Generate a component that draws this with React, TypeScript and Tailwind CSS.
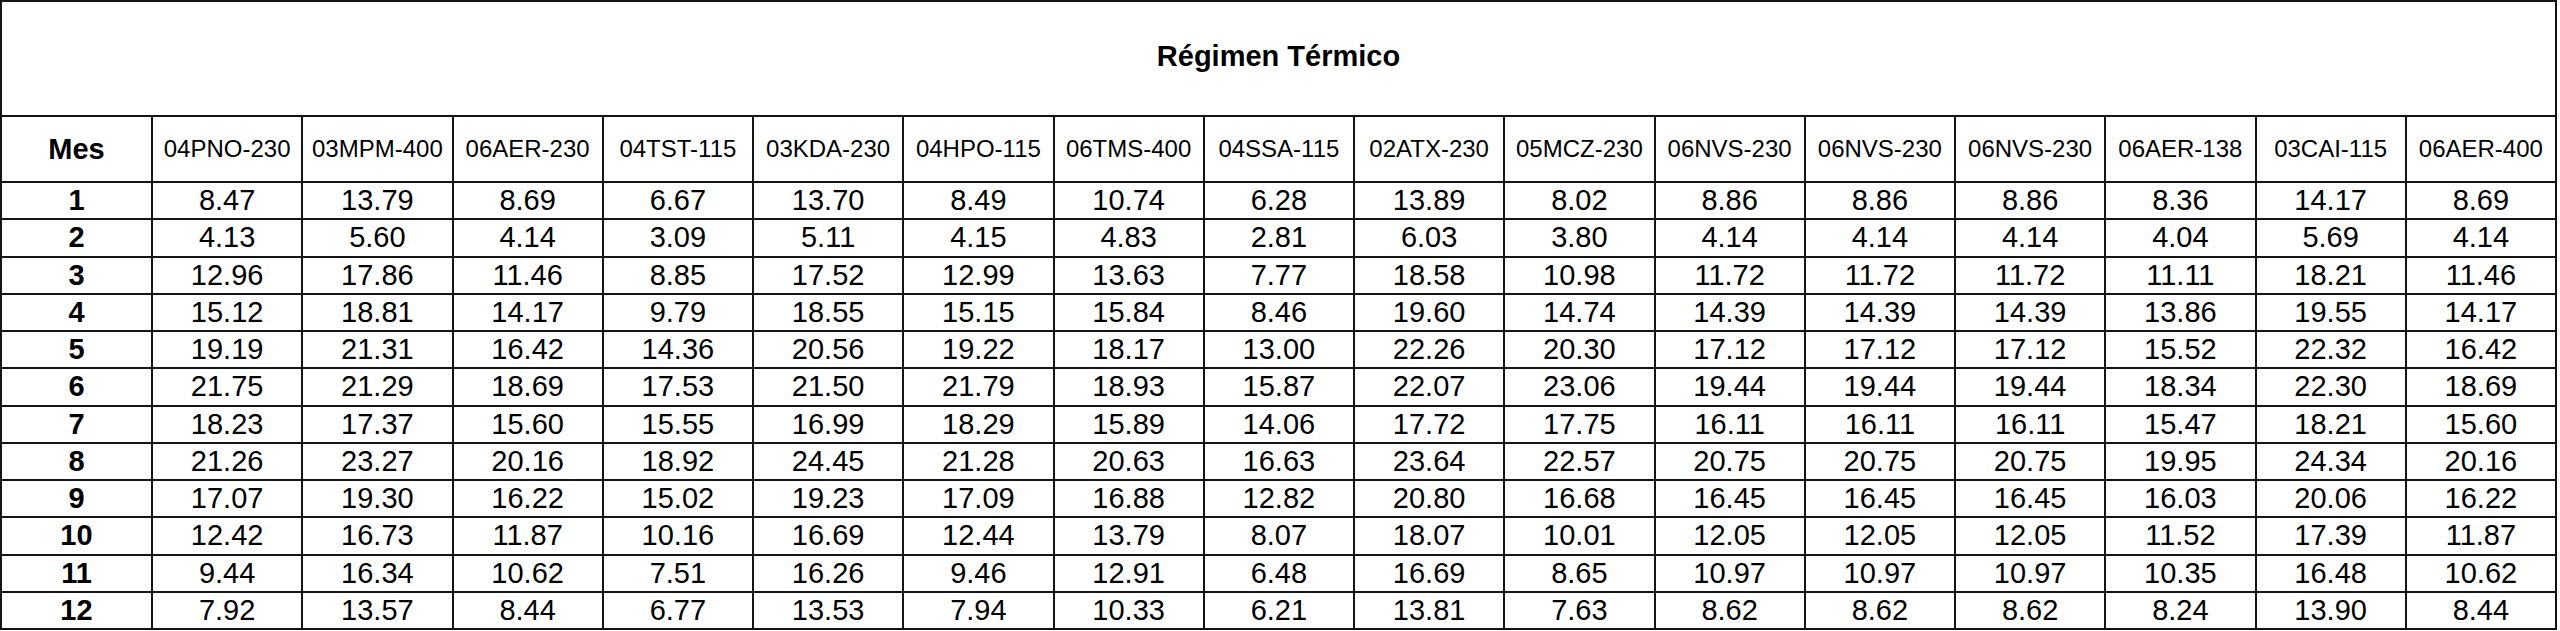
import React from "react";

const headers = [
  "04PNO-230", "03MPM-400", "06AER-230", "04TST-115", "03KDA-230", "04HPO-115",
  "06TMS-400", "04SSA-115", "02ATX-230", "05MCZ-230", "06NVS-230", "06NVS-230",
  "06NVS-230", "06AER-138", "03CAI-115", "06AER-400",
];

const rows: string[][] = [
  ["8.47", "13.79", "8.69", "6.67", "13.70", "8.49", "10.74", "6.28", "13.89", "8.02", "8.86", "8.86", "8.86", "8.36", "14.17", "8.69"],
  ["4.13", "5.60", "4.14", "3.09", "5.11", "4.15", "4.83", "2.81", "6.03", "3.80", "4.14", "4.14", "4.14", "4.04", "5.69", "4.14"],
  ["12.96", "17.86", "11.46", "8.85", "17.52", "12.99", "13.63", "7.77", "18.58", "10.98", "11.72", "11.72", "11.72", "11.11", "18.21", "11.46"],
  ["15.12", "18.81", "14.17", "9.79", "18.55", "15.15", "15.84", "8.46", "19.60", "14.74", "14.39", "14.39", "14.39", "13.86", "19.55", "14.17"],
  ["19.19", "21.31", "16.42", "14.36", "20.56", "19.22", "18.17", "13.00", "22.26", "20.30", "17.12", "17.12", "17.12", "15.52", "22.32", "16.42"],
  ["21.75", "21.29", "18.69", "17.53", "21.50", "21.79", "18.93", "15.87", "22.07", "23.06", "19.44", "19.44", "19.44", "18.34", "22.30", "18.69"],
  ["18.23", "17.37", "15.60", "15.55", "16.99", "18.29", "15.89", "14.06", "17.72", "17.75", "16.11", "16.11", "16.11", "15.47", "18.21", "15.60"],
  ["21.26", "23.27", "20.16", "18.92", "24.45", "21.28", "20.63", "16.63", "23.64", "22.57", "20.75", "20.75", "20.75", "19.95", "24.34", "20.16"],
  ["17.07", "19.30", "16.22", "15.02", "19.23", "17.09", "16.88", "12.82", "20.80", "16.68", "16.45", "16.45", "16.45", "16.03", "20.06", "16.22"],
  ["12.42", "16.73", "11.87", "10.16", "16.69", "12.44", "13.79", "8.07", "18.07", "10.01", "12.05", "12.05", "12.05", "11.52", "17.39", "11.87"],
  ["9.44", "16.34", "10.62", "7.51", "16.26", "9.46", "12.91", "6.48", "16.69", "8.65", "10.97", "10.97", "10.97", "10.35", "16.48", "10.62"],
  ["7.92", "13.57", "8.44", "6.77", "13.53", "7.94", "10.33", "6.21", "13.81", "7.63", "8.62", "8.62", "8.62", "8.24", "13.90", "8.44"],
];

export default function App() {
  return (
    <div className="bg-white w-[2560px] h-[631px] font-['Liberation_Sans',Arial,sans-serif] text-black">
      <div className="w-[2557px] bg-[#141414] p-[2px] grid gap-[2px] grid-cols-[149px_repeat(16,1fr)] grid-rows-[113px_64px_repeat(12,35.25px)]">
        <div className="col-span-17 bg-white flex items-center justify-center pb-[5px]">
          <span className="text-[29px] font-bold leading-none">Régimen Térmico</span>
        </div>
        <div className="bg-white flex items-center justify-center">
          <span className="text-[29px] font-bold leading-none">Mes</span>
        </div>
        {headers.map((h, i) => (
          <div key={"h" + i} className="bg-white flex items-center justify-center">
            <span className="text-[24px] leading-none">{h}</span>
          </div>
        ))}
        {rows.map((r, ri) => (
          <React.Fragment key={"r" + ri}>
            <div className="bg-white flex items-center justify-center">
              <span className="text-[29px] font-bold leading-none">{ri + 1}</span>
            </div>
            {r.map((v, ci) => (
              <div key={ri + "-" + ci} className="bg-white flex items-center justify-center">
                <span className="text-[29px] leading-none">{v}</span>
              </div>
            ))}
          </React.Fragment>
        ))}
      </div>
    </div>
  );
}
